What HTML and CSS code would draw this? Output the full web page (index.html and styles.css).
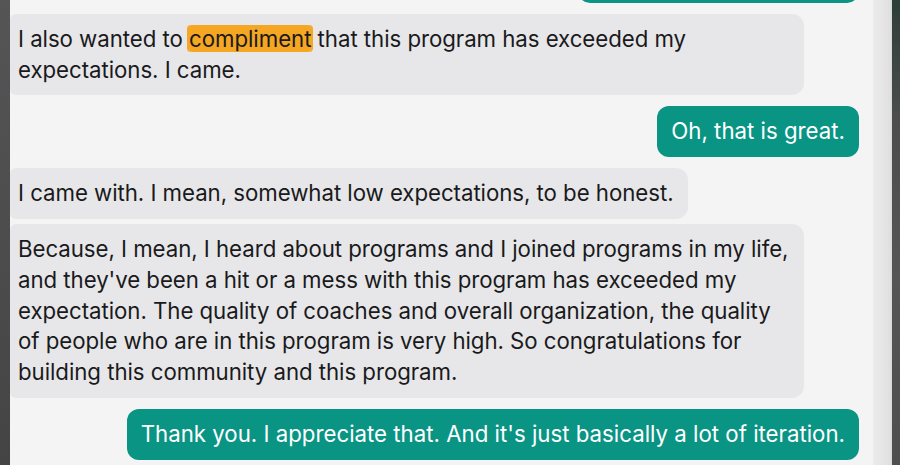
FILE: index.html
```html
<!DOCTYPE html>
<html>
<head>
<meta charset="utf-8">
<link rel="stylesheet" href="styles.css">
</head>
<body>
<div class="edge-left"></div>
<main class="panel">
  <div class="thread">
    <div class="msg out"><div class="bubble clipped"></div></div>
    <div class="msg in"><div class="bubble">I also wanted to <mark class="hl">compliment</mark> that this program has exceeded my expectations. I came.</div></div>
    <div class="msg out"><div class="bubble">Oh, that is great.</div></div>
    <div class="msg in"><div class="bubble">I came with. I mean, somewhat low expectations, to be honest.</div></div>
    <div class="msg in same"><div class="bubble">Because, I mean, I heard about programs and I joined programs in my life, and they've been a hit or a mess with this program has exceeded my expectation. The quality of coaches and overall organization, the quality of people who are in this program is very high. So congratulations for building this community and this program.</div></div>
    <div class="msg out"><div class="bubble">Thank you. I appreciate that. And it's just basically a lot of iteration.</div></div>
  </div>
</main>
<div class="gutter"></div>
<div class="edge-right"></div>
</body>
</html>
```
FILE: styles.css
```css
html, body {
  margin: 0;
  padding: 0;
  height: 465px;
  overflow: hidden;
}
body {
  display: flex;
  font-family: Inter, "Noto Sans", sans-serif;
  background: #f4f4f4;
}
.edge-left {
  width: 10px;
  flex: none;
  background: linear-gradient(180deg, #555 0%, #4b4b4b 60%, #444 100%);
}
.panel {
  flex: 1;
  background: #f4f4f4;
  overflow: hidden;
  padding-right: 14px;
}
.thread {
  display: flex;
  flex-direction: column;
  margin-top: -48px;
}
.msg {
  display: flex;
  margin-top: 11px;
}
.msg:first-child { margin-top: 0; }
.msg.same { margin-top: 5px; }
.msg.out { justify-content: flex-end; }
.bubble {
  font-size: 22.25px;
  line-height: 30.8px;
  padding: 10px 14px;
  border-radius: 12px;
  max-width: 772px;
}
.bubble.clipped {
  width: 253px;
  height: 30.8px;
}
.in .bubble {
  background: #e7e7e9;
  color: #1a1a1c;
  padding-left: 8px;
  padding-right: 14px;
  max-width: 772px;
  border-radius: 6px 12px 12px 6px;
  letter-spacing: -0.05px;
}
.out .bubble {
  background: #0a9484;
  color: #ffffff;
}
.hl {
  background: #f5a623;
  color: #1a1a1c;
  border-radius: 4px;
  box-shadow: 2px 0 0 #f5a623, -2px 0 0 #f5a623;
}
.gutter {
  width: 18px;
  flex: none;
  background: linear-gradient(90deg, #ebebeb 0%, #e4e4e4 70%, #dedede 100%);
  border-right: 1px solid #d9d9d9;
}
.edge-right {
  width: 8px;
  flex: none;
  background: linear-gradient(180deg, #2e3d39 0%, #4a4d4c 25%, #555 60%, #4e4e4e 100%);
}
```
